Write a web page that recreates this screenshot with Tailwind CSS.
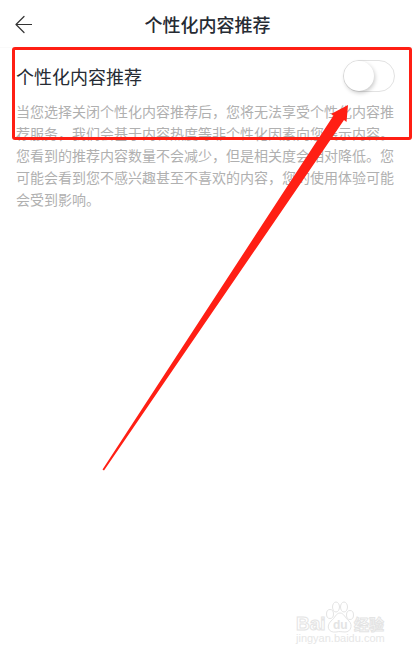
<!DOCTYPE html>
<html lang="zh-CN">

<head>
  <meta charset="UTF-8" />
  <meta name="viewport" content="width=device-width, initial-scale=1.0" />
  <title>个性化内容推荐</title>
  <script src="https://cdn.jsdelivr.net/npm/@tailwindcss/browser@4"></script>
</head>

<body class="relative min-h-screen overflow-x-hidden bg-white font-['Noto_Sans_CJK_SC',sans-serif] text-[#262b33]">
  <!-- Header -->
  <header class="grid h-12 grid-cols-[32px_1fr_32px] items-center border-b border-[#fafafa] pr-2.5 pl-3">
    <a href="#" aria-label="返回">
      <svg class="h-5 w-5" viewBox="0 0 20 20" fill="none" stroke="#333" stroke-width="1.2" stroke-linecap="round" stroke-linejoin="round">
        <path d="M20 10.5H4M12 2.5L4 10.5L12 18.5" />
      </svg>
    </a>
    <h1 class="text-center text-lg font-medium">个性化内容推荐</h1>
  </header>

  <!-- Setting -->
  <main class="px-4 pt-3">
    <div class="flex items-center justify-between pr-0.5">
      <label for="recommend" class="text-lg">个性化内容推荐</label>
      <input id="recommend" type="checkbox" role="switch"
        class="h-8 w-[52px] appearance-none rounded-full border border-[#e2e2e2] bg-white before:block before:h-[30px] before:w-[30px] before:rounded-full before:bg-white before:shadow-[1px_2px_4px_rgba(0,0,0,0.22)] checked:bg-green-500 checked:before:translate-x-5" />
    </div>
    <p class="mt-2 text-sm leading-[22px] text-[#b0b0b0]">当您选择关闭个性化内容推荐后，您将无法享受个性化内容推荐服务，我们会基于内容热度等非个性化因素向您展示内容。您看到的推荐内容数量不会减少，但是相关度会相对降低。您可能会看到您不感兴趣甚至不喜欢的内容，您的使用体验可能会受到影响。</p>
  </main>

  <!-- Highlight box and arrow -->
  <div class="pointer-events-none absolute top-[47px] right-px left-3 h-[93px] rounded-[3px] border-3 border-[#ff1f14]"></div>
  <svg class="pointer-events-none absolute top-[104px] right-[65px] h-[368px] w-[246px]" viewBox="102 104 246 368" fill="#ff1f14">
    <path d="M348 105L346.5 122L344 120L104 470.5L102.5 469.5L333.5 115.5L331 114Z" />
  </svg>

  <!-- Watermark -->
  <div class="absolute right-7 bottom-2.5 flex flex-col items-center text-white">
    <svg class="h-10 w-[92px]" viewBox="0 0 92 40" fill="#fff" stroke="#e4e4e4" stroke-width="1" font-family="Liberation Sans" font-weight="bold">
      <text x="3" y="37" font-size="19">Bai</text>
      <ellipse cx="37" cy="21" rx="3.5" ry="4.5" />
      <ellipse cx="43" cy="14" rx="3.5" ry="5" />
      <ellipse cx="51" cy="14" rx="3.5" ry="5" />
      <ellipse cx="57" cy="22" rx="3.5" ry="4.5" />
      <path d="M47 20C51 20 52 25 56 28C60 32 58 39 52 39C49 39 47 38 43 39C35 40 33 33 38 28C42 25 43 20 47 20Z" />
      <text x="40" y="36" font-size="12" fill="#e4e4e4" stroke="none">du</text>
      <text x="61" y="37" font-size="15" font-family="Noto Sans CJK SC">经验</text>
    </svg>
    <svg class="h-3 w-[92px]" viewBox="0 0 92 12" fill="#e6e6e6" font-family="Liberation Sans">
      <text x="3" y="9" font-size="11">jingyan.baidu.com</text>
    </svg>
  </div>
</body>

</html>
